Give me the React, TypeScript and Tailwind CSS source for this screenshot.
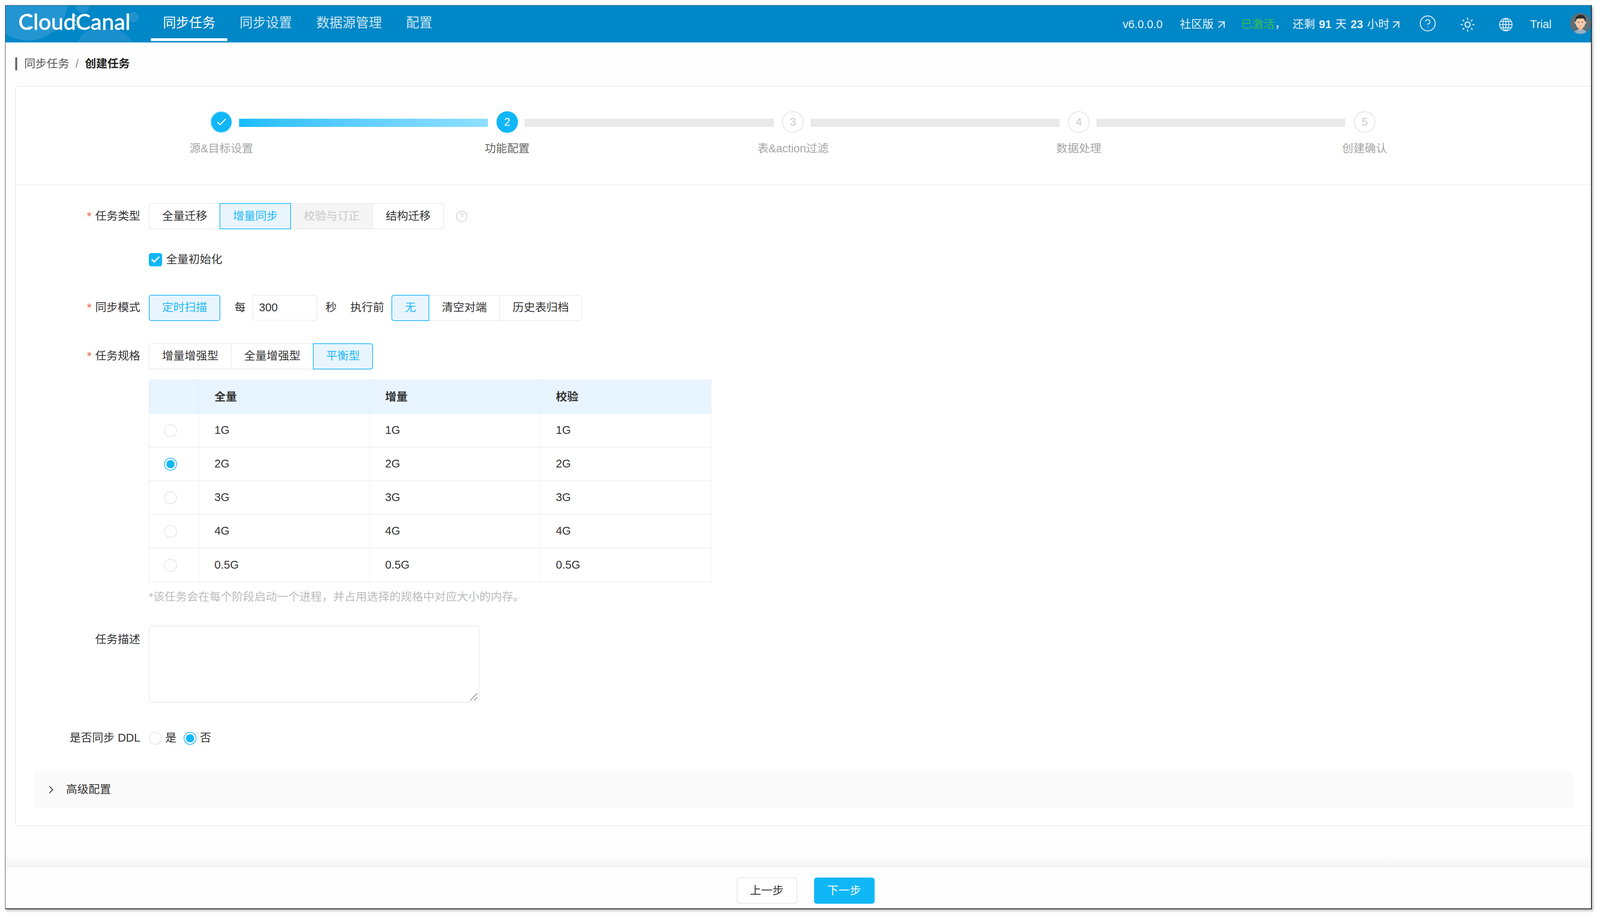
import React from 'react';
import { ArrowUpRight, Check, ChevronRight, CircleHelp, Sun } from 'lucide-react';

const navItems = ['同步任务', '同步设置', '数据源管理', '配置'];
const steps = ['源&目标设置', '功能配置', '表&action过滤', '数据处理', '创建确认'];
const specs = ['1G', '2G', '3G', '4G', '0.5G'];

function Segmented({ items, active, disabled }: { items: string[]; active: string; disabled?: string }) {
  return (
    <div className="flex h-[67px] shrink-0">
      {items.map((x, i) => (
        <div
          key={x}
          className={`flex items-center justify-center px-[32px] border-2 whitespace-nowrap
            ${i > 0 ? '-ml-[2px]' : ''}
            ${i === 0 ? 'rounded-l-[7px]' : ''}
            ${i === items.length - 1 ? 'rounded-r-[7px]' : ''}
            ${x === active ? 'relative border-[#2cbcf6] bg-[#e8f5ff] text-[#1fb9f7]' : 'border-[#ececec]'}
            ${x === disabled ? 'bg-[#f5f5f5] text-[#c8c8c8]' : ''}`}
        >
          {x}
        </div>
      ))}
    </div>
  );
}

function Radio({ checked }: { checked?: boolean }) {
  return (
    <span className={`flex h-[33px] w-[33px] shrink-0 items-center justify-center rounded-full border-2 bg-white ${checked ? 'border-[#2cbcf6]' : 'border-[#e6e6e6]'}`}>
      {checked && <span className="h-[21px] w-[21px] rounded-full bg-[#10b7f7]" />}
    </span>
  );
}

function Label({ text, required }: { text: string; required?: boolean }) {
  return (
    <div className="flex w-[318px] shrink-0 items-center justify-end whitespace-nowrap">
      {required && <span className="mr-[9px] text-[32px] leading-none text-[#ef6a4c]">*</span>}
      {text}
    </div>
  );
}

function Logo() {
  return (
    <div className="relative h-full w-[372px] shrink-0">
      <svg className="absolute left-0 top-0" width="372" height="95" viewBox="0 0 372 95">
        <circle cx="58" cy="-12" r="102" fill="#2395d1" />
        <circle cx="197" cy="2" r="17" fill="#1f92cf" />
        <circle cx="328" cy="30" r="13" fill="#1f92cf" />
        <path d="M184 95 C192 74 208 58 254 58 C296 58 316 76 324 95 Z" fill="#1a8fcd" />
      </svg>
      <span className="absolute left-[33px] top-[4px] font-['Lato',sans-serif] text-[57px] leading-[72px] text-white [-webkit-text-stroke:1px_white]">
        CloudCanal
      </span>
      {/* speckles where the letters of the logo dissolve */}
      <svg className="absolute left-0 top-0" width="372" height="95" viewBox="0 0 372 95" fill="#ffffff">
        <circle cx="60" cy="22" r="1.6" />
        <circle cx="66" cy="26" r="1.6" />
        <circle cx="61" cy="29" r="1.6" />
        <circle cx="60" cy="54" r="1.6" />
        <circle cx="66" cy="57" r="1.6" />
        <circle cx="61" cy="60" r="1.6" />
        <circle cx="179" cy="26" r="1.6" />
        <circle cx="184" cy="32" r="1.6" />
        <circle cx="178" cy="38" r="1.6" />
        <circle cx="185" cy="44" r="1.6" />
        <circle cx="180" cy="50" r="1.6" />
        <circle cx="186" cy="56" r="1.6" />
      </svg>
    </div>
  );
}

function Avatar() {
  return (
    <svg width="54" height="54" viewBox="0 0 54 54" className="shrink-0">
      <clipPath id="avatar-clip">
        <circle cx="27" cy="27" r="27" />
      </clipPath>
      <g clipPath="url(#avatar-clip)">
        <rect width="54" height="54" fill="#5c7078" />
        <ellipse cx="27" cy="51" rx="16" ry="9" fill="#8fb0c8" />
        <rect x="22" y="34" width="10" height="11" fill="#e8ae8e" />
        <circle cx="14.5" cy="25" r="2.6" fill="#f5c6a5" />
        <circle cx="39.5" cy="25" r="2.6" fill="#f5c6a5" />
        <ellipse cx="27" cy="26" rx="12" ry="14.5" fill="#f7c9a9" />
        <path d="M14 23 C12 10 20 5 28 5 C37 5 42 12 40 23 C38 17 36 14 33 14 C27 15 20 14 17 15 C15 17 15 20 14 23 Z" fill="#2b2b2e" />
        <circle cx="22" cy="24" r="1.5" fill="#6b4a4a" />
        <circle cx="32" cy="24" r="1.5" fill="#6b4a4a" />
        <path d="M24 33 Q27 35 30 33" fill="none" stroke="#c98a6e" strokeWidth="1" />
      </g>
    </svg>
  );
}

function GlobeIcon() {
  return (
    <svg width="36" height="36" viewBox="0 0 36 36" fill="none" stroke="currentColor" strokeWidth="2" className="shrink-0">
      <circle cx="18" cy="18" r="16" />
      <ellipse cx="18" cy="18" rx="7.5" ry="16" />
      <path d="M18 2 V34 M2 18 H34 M4.5 10 H31.5 M4.5 26 H31.5" />
    </svg>
  );
}

function Header() {
  return (
    <header className="flex h-[95px] shrink-0 items-center overflow-hidden border-b border-[#4db3e6] bg-[#0087c7] text-white">
      <Logo />
      <nav className="flex h-full">
        {navItems.map((x, i) => (
          <div
            key={x}
            className={`flex h-[91px] items-center px-[31px] text-[33.6px] whitespace-nowrap ${i === 0 ? 'border-b-[7px] border-white pt-[7px]' : 'text-white/80'}`}
          >
            {x}
          </div>
        ))}
      </nav>
      <div className="ml-auto flex shrink-0 items-center pt-[4px] text-[28.8px] text-white/90">
        <span>v6.0.0.0</span>
        <span className="ml-[44px]">社区版</span>
        <ArrowUpRight size={34} strokeWidth={1.8} className="ml-[3px]" />
        <span className="ml-[33px] text-[#39c14a]">已激活</span>
        <span className="mr-[17px]">，</span>
        <span className="whitespace-pre">还剩 <b className="mx-[2px]">91</b> 天 <b className="mx-[2px]">23</b> 小时</span>
        <ArrowUpRight size={34} strokeWidth={1.8} />
        <CircleHelp size={46} strokeWidth={1.2} className="ml-[41px] -mt-[6px]" />
        <Sun size={40} strokeWidth={1.6} className="ml-[59px]" />
        <span className="ml-[60px]"><GlobeIcon /></span>
        <span className="ml-[44px]">Trial</span>
        <div className="ml-[47px] -mt-[6px]">
          <Avatar />
        </div>
      </div>
    </header>
  );
}

function Steps() {
  return (
    <section className="grid h-[252px] shrink-0 grid-cols-5 border-b-2 border-[#eeeeee] pl-[3.96%] pr-[5.3%] pt-[63px]">
      {steps.map((x, i) => (
        <div key={x} className="relative flex flex-col items-center">
          <div
            className={`flex h-[55px] w-[55px] shrink-0 items-center justify-center rounded-full border-2 text-[28.8px]
              ${i === 0 ? 'border-[#7fd8fb] bg-[#10b7f7] text-white' : ''}
              ${i === 1 ? 'border-[#10b7f7] bg-[#10b7f7] text-white' : ''}
              ${i > 1 ? 'border-[#e4e4e4] bg-white text-[#cccccc]' : ''}`}
          >
            {i === 0 ? <Check size={30} strokeWidth={2} /> : i + 1}
          </div>
          {i < 4 && (
            <div
              className={`absolute left-[calc(50%+45px)] top-[19px] h-[21px] w-[calc(100%-94px)] ${i === 0 ? 'bg-linear-to-r from-[#14bdff] to-[#8fe0ff]' : 'bg-[#e9e9ea]'}`}
            />
          )}
          <div className={`mt-[20px] text-[28.8px] leading-[40px] whitespace-nowrap ${i === 1 ? 'text-[#666666]' : 'text-[#a6a6a6]'}`}>{x}</div>
        </div>
      ))}
    </section>
  );
}

function SpecTable() {
  const cols = 'grid grid-cols-[128px_437px_437px_1fr]';
  return (
    <div className="ml-[340px] mt-[26px] w-[1440px] border border-[#eaeaea]">
      <div className={`${cols} h-[87px] bg-[#e8f4ff] font-bold`}>
        <div className="border-r border-[#e2ecf5]" />
        {['全量', '增量', '校验'].map((x, i) => (
          <div key={x} className={`flex items-center pl-[39px] ${i < 2 ? 'border-r border-[#e2ecf5]' : ''}`}>{x}</div>
        ))}
      </div>
      {specs.map((x, i) => (
        <div key={x} className={`${cols} h-[86px] ${i < 4 ? 'border-b-2 border-[#efefef]' : ''}`}>
          <div className="flex items-center justify-center border-r border-[#efefef] pr-[18px]">
            <Radio checked={x === '2G'} />
          </div>
          {[0, 1, 2].map((c) => (
            <div key={c} className={`flex items-center pl-[39px] ${c < 2 ? 'border-r border-[#efefef]' : ''}`}>{x}</div>
          ))}
        </div>
      ))}
    </div>
  );
}

function Form() {
  return (
    <section className="pt-[46px] text-[28.8px] text-[#333333]">
      <div className="flex h-[67px]">
        <Label text="任务类型" required />
        <div className="ml-[22px] flex items-center">
          <Segmented items={['全量迁移', '增量同步', '校验与订正', '结构迁移']} active="增量同步" disabled="校验与订正" />
          <CircleHelp size={32} strokeWidth={1.1} className="ml-[29px] text-[#c4c4c4]" />
        </div>
      </div>

      <div className="ml-[340px] mt-[61px] flex h-[34px] items-center">
        <span className="flex h-[34px] w-[34px] items-center justify-center rounded-[6px] bg-[#10b7f7] text-white">
          <Check size={26} strokeWidth={3.5} />
        </span>
        <span className="ml-[10px]">全量初始化</span>
      </div>

      <div className="mt-[72px] flex h-[68px]">
        <Label text="同步模式" required />
        <div className="ml-[22px] flex items-center">
          <Segmented items={['定时扫描']} active="定时扫描" />
          <span className="ml-[36px]">每</span>
          <div className="ml-[17px] flex h-[66px] w-[167px] items-center rounded-[7px] border-2 border-[#ececec] pl-[15px] text-[#333333]">300</div>
          <span className="ml-[20px]">秒</span>
          <span className="ml-[35px]">执行前</span>
          <div className="ml-[19px]">
            <Segmented items={['无', '清空对端', '历史表归档']} active="无" />
          </div>
        </div>
      </div>

      <div className="mt-[56px] flex h-[68px]">
        <Label text="任务规格" required />
        <div className="ml-[22px] flex items-center">
          <Segmented items={['增量增强型', '全量增强型', '平衡型']} active="平衡型" />
        </div>
      </div>

      <SpecTable />

      <p className="ml-[340px] mt-[17px] leading-[40px] text-[#bbbbbb]">*该任务会在每个阶段启动一个进程，并占用选择的规格中对应大小的内存。</p>

      <div className="mt-[54px] flex h-[197px]">
        <div className="flex h-[72px] items-center">
          <Label text="任务描述" />
        </div>
        <div className="relative ml-[22px] h-full w-[847px] rounded-[7px] border-2 border-[#ececec]">
          <svg className="absolute bottom-[2px] right-[2px]" width="22" height="22" viewBox="0 0 22 22" fill="none" stroke="#777777" strokeWidth="1.6">
            <path d="M2 21 L20 2 M12 21 L20 12" />
          </svg>
        </div>
      </div>

      <div className="mt-[74px] flex h-[34px] items-center">
        <Label text="是否同步 DDL" />
        <div className="ml-[22px] flex items-center">
          <Radio />
          <span className="ml-[9px]">是</span>
          <span className="ml-[18px]"><Radio checked /></span>
          <span className="ml-[9px]">否</span>
        </div>
      </div>

      <div className="ml-[45px] mr-[44px] mt-[68px] flex h-[94px] items-center rounded-[7px] bg-[#fafafa]">
        <ChevronRight size={32} strokeWidth={1.6} className="ml-[29px]" />
        <span className="ml-[22px]">高级配置</span>
      </div>
      <div className="h-[44px]" />
    </section>
  );
}

export default function App() {
  return (
    <div className="h-screen w-full bg-white pb-[20px] pl-[13px] pr-[21px] pt-[13px] font-['Liberation_Sans','Noto_Sans_CJK_SC',sans-serif]">
      <div className="flex h-full w-full flex-col overflow-hidden border-b-2 border-l border-r-2 border-t border-b-[#1c1c1c] border-l-[#333333] border-r-[#1c1c1c] border-t-[#555555] bg-[#fefefe] shadow-[3px_4px_6px_rgba(0,0,0,0.3)]">
        <Header />
        <div className="flex h-[111px] shrink-0 items-center pb-[2px] pl-[25px] text-[28.8px]">
          <span className="h-[33px] w-[5px] bg-[#666666]" />
          <span className="ml-[18px] text-[#555555]">同步任务</span>
          <span className="mx-[16px] text-[#888888]">/</span>
          <span className="font-bold text-[#222222]">创建任务</span>
        </div>
        <main className="ml-[25px] shrink-0 border-b-2 border-l-2 border-t-2 border-[#eeeeee] bg-white">
          <Steps />
          <Form />
        </main>
        <div className="h-[106px] shrink-0 bg-linear-to-b from-[#fefefe] from-70% to-[#f3f3f3]" />
        <footer className="flex flex-1 items-start justify-center gap-[43px] pl-[37px] pt-[26px] text-[28.8px]">
          <button className="h-[67px] w-[155px] rounded-[7px] border-2 border-[#e8e8e8] bg-white text-[#333333]">上一步</button>
          <button className="h-[67px] w-[155px] rounded-[7px] bg-[#10b7f7] text-white">下一步</button>
        </footer>
      </div>
    </div>
  );
}
